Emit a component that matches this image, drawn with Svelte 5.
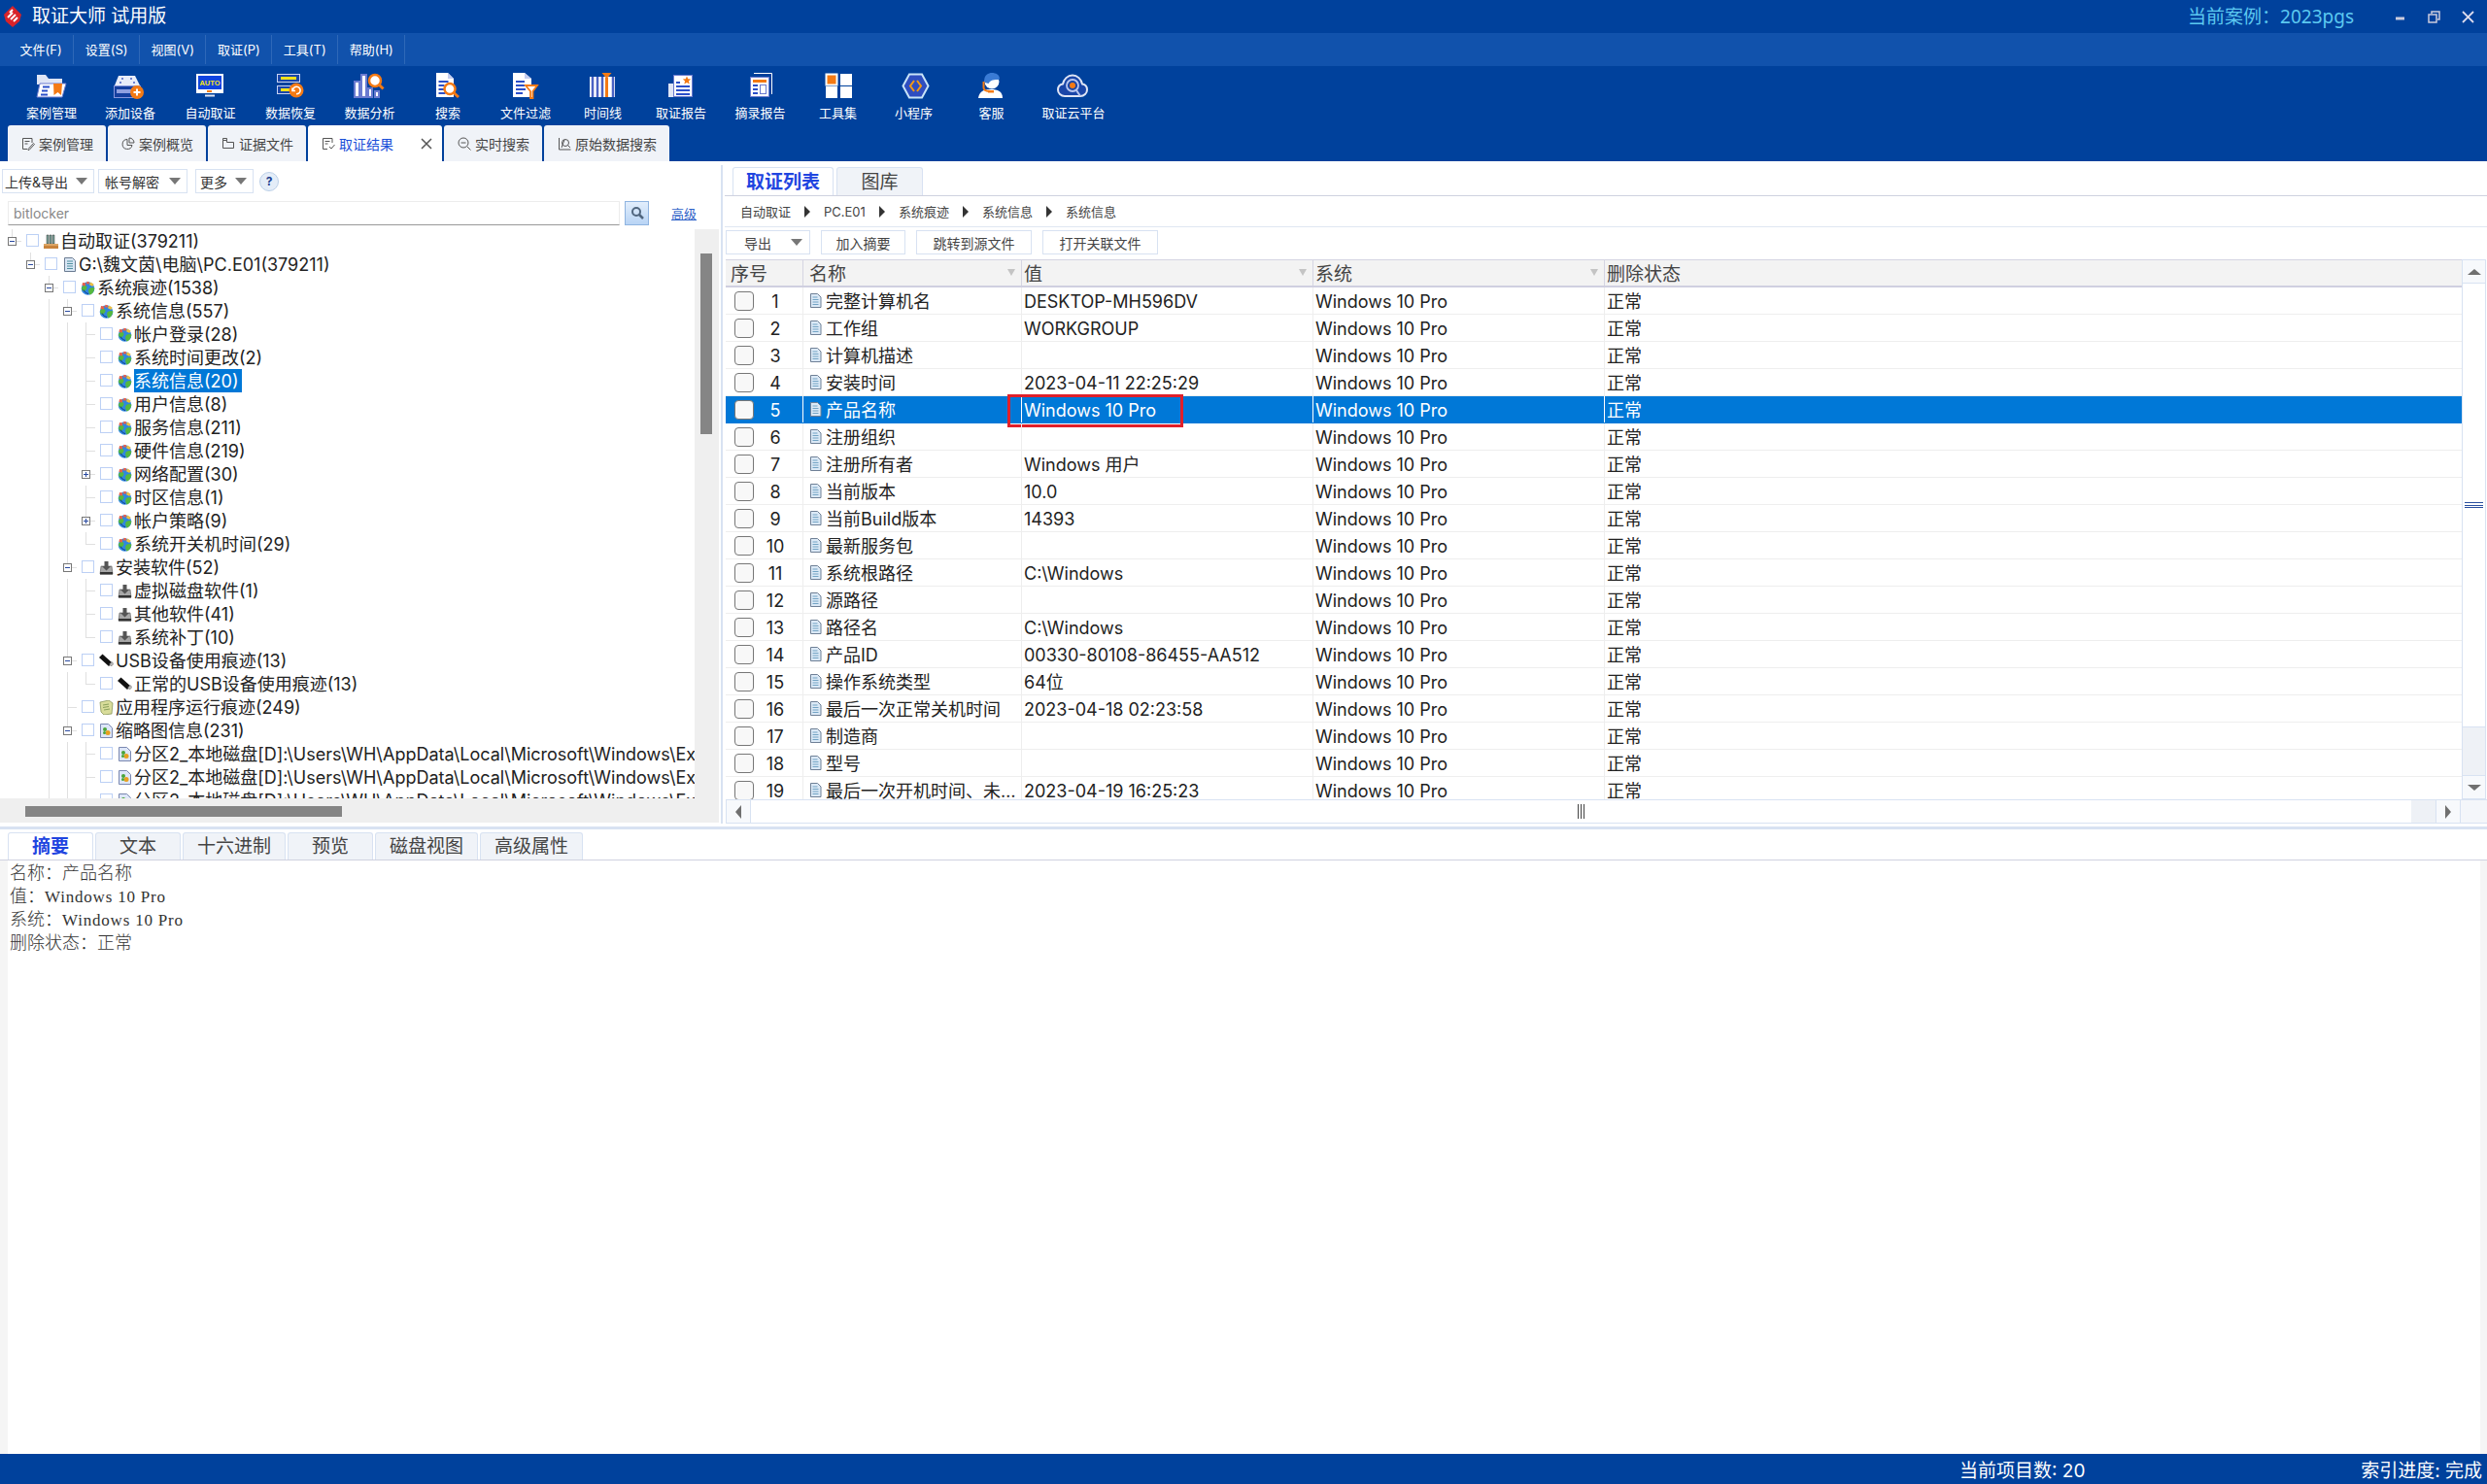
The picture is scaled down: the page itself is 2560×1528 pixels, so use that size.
<script>
  const menus = ['文件(F)', '设置(S)', '视图(V)', '取证(P)', '工具(T)', '帮助(H)'];

  const tools = [
    { id: 't-case', label: '案例管理', w: 80 },
    { id: 't-add', label: '添加设备', w: 82 },
    { id: 't-auto', label: '自动取证', w: 83 },
    { id: 't-recover', label: '数据恢复', w: 82 },
    { id: 't-analysis', label: '数据分析', w: 81 },
    { id: 't-search', label: '搜索', w: 80 },
    { id: 't-filter', label: '文件过滤', w: 80 },
    { id: 't-timeline', label: '时间线', w: 79 },
    { id: 't-report', label: '取证报告', w: 82 },
    { id: 't-excerpt', label: '摘录报告', w: 81 },
    { id: 't-tools', label: '工具集', w: 79 },
    { id: 't-mini', label: '小程序', w: 77 },
    { id: 't-agent', label: '客服', w: 83 },
    { id: 't-cloud', label: '取证云平台', w: 86 }
  ];

  const tabs = [
    { id: 'p-edit', label: '案例管理' },
    { id: 'p-pie', label: '案例概览' },
    { id: 'p-folder', label: '证据文件' },
    { id: 'p-check', label: '取证结果', active: true },
    { id: 'p-find', label: '实时搜索' },
    { id: 'p-raw', label: '原始数据搜索' }
  ];

  // level, label, icon, expander ('-', '+', or line type for leaves)
  const tree = [
    [0, '自动取证(379211)', 'i-books', '-'],
    [1, 'G:\\魏文茵\\电脑\\PC.E01(379211)', 'i-doc', '-'],
    [2, '系统痕迹(1538)', 'i-globe', '-'],
    [3, '系统信息(557)', 'i-globe', '-'],
    [4, '帐户登录(28)', 'i-globe', 'tee'],
    [4, '系统时间更改(2)', 'i-globe', 'tee'],
    [4, '系统信息(20)', 'i-globe', 'tee', true],
    [4, '用户信息(8)', 'i-globe', 'tee'],
    [4, '服务信息(211)', 'i-globe', 'tee'],
    [4, '硬件信息(219)', 'i-globe', 'tee'],
    [4, '网络配置(30)', 'i-globe', '+'],
    [4, '时区信息(1)', 'i-globe', 'tee'],
    [4, '帐户策略(9)', 'i-globe', '+'],
    [4, '系统开关机时间(29)', 'i-globe', 'ell'],
    [3, '安装软件(52)', 'i-install', '-'],
    [4, '虚拟磁盘软件(1)', 'i-install', 'tee'],
    [4, '其他软件(41)', 'i-install', 'tee'],
    [4, '系统补丁(10)', 'i-install', 'ell'],
    [3, 'USB设备使用痕迹(13)', 'i-usb', '-'],
    [4, '正常的USB设备使用痕迹(13)', 'i-usb', 'ell'],
    [3, '应用程序运行痕迹(249)', 'i-note', 'tee'],
    [3, '缩略图信息(231)', 'i-thumb', '-'],
    [4, '分区2_本地磁盘[D]:\\Users\\WH\\AppData\\Local\\Microsoft\\Windows\\Explorer\\thumbcache', 'i-thumb', 'tee'],
    [4, '分区2_本地磁盘[D]:\\Users\\WH\\AppData\\Local\\Microsoft\\Windows\\Explorer\\thumbcache', 'i-thumb', 'tee'],
    [4, '分区2_本地磁盘[D]:\\Users\\WH\\AppData\\Local\\Microsoft\\Windows\\Explorer\\thumbcache', 'i-thumb', 'tee']
  ];

  const crumbs = ['自动取证', 'PC.E01', '系统痕迹', '系统信息', '系统信息'];

  const rows = [
    ['完整计算机名', 'DESKTOP-MH596DV'],
    ['工作组', 'WORKGROUP'],
    ['计算机描述', ''],
    ['安装时间', '2023-04-11 22:25:29'],
    ['产品名称', 'Windows 10 Pro'],
    ['注册组织', ''],
    ['注册所有者', 'Windows 用户'],
    ['当前版本', '10.0'],
    ['当前Build版本', '14393'],
    ['最新服务包', ''],
    ['系统根路径', 'C:\\Windows'],
    ['源路径', ''],
    ['路径名', 'C:\\Windows'],
    ['产品ID', '00330-80108-86455-AA512'],
    ['操作系统类型', '64位'],
    ['最后一次正常关机时间', '2023-04-18 02:23:58'],
    ['制造商', ''],
    ['型号', ''],
    ['最后一次开机时间、未…', '2023-04-19 16:25:23']
  ];

  const detailTabs = ['摘要', '文本', '十六进制', '预览', '磁盘视图', '高级属性'];
</script>

<svg class="defs" aria-hidden="true">
  <symbol id="t-case" viewBox="0 0 36 30">
    <path d="M3 3h9l3 4h14v6H3z" fill="#dfe5f5" />
    <path d="M6 12h27l-4 14H3z" fill="#fff" stroke="#6a7bd0" />
    <path d="M20 12h9l-1 12-3.500-3-4 3z" fill="#f47a14" />
    <path d="M9 15.500h7M8 19.500h6M7 23.500h7" stroke="#2b4fc9" stroke-width="2" />
  </symbol>
  <symbol id="t-add" viewBox="0 0 36 30">
    <path d="M6 4h17l5 10H2z" fill="#e9edf9" />
    <path d="M9 7h2M18 7h2M7 11h2M21 11h2" stroke="#4a62c4" stroke-width="1.500" />
    <rect x="1.500" y="14.500" width="27" height="12" fill="#153f9f" stroke="#8696dc" />
    <rect x="4" y="18" width="15" height="4" fill="#8fa0e0" />
    <circle cx="25" cy="21" r="7" fill="#f47a14" />
    <path d="M25 17.500v7M21.500 21h7" stroke="#fff" stroke-width="2" />
  </symbol>
  <symbol id="t-auto" viewBox="0 0 36 30">
    <rect x="3" y="2" width="28" height="20" fill="#fff" />
    <rect x="5" y="4" width="24" height="14" fill="#1044e0" />
    <rect x="14" y="19" width="5" height="2" fill="#f47a14" />
    <path d="M12 24.500h10" stroke="#dfe5f5" stroke-width="2" />
  </symbol>
  <symbol id="t-recover" viewBox="0 0 36 30">
    <rect x="4.500" y="2.500" width="23" height="8" fill="#1a46a8" stroke="#c8d2f2" />
    <rect x="8" y="5" width="16" height="3" fill="#f4e11a" />
    <rect x="4.500" y="14.500" width="15" height="8" fill="#1a46a8" stroke="#c8d2f2" />
    <rect x="8" y="17" width="9" height="3" fill="#f4e11a" />
    <circle cx="24" cy="19" r="7.500" fill="#f47a14" />
    <path d="M20.500 19a3.800 3.800 0 1 1 3.500 3.800M20 16.500v3h3" fill="none" stroke="#fff" stroke-width="1.600" />
  </symbol>
  <symbol id="t-analysis" viewBox="0 0 36 30">
    <g fill="#fff" stroke="#6a7bd0" stroke-width="2">
      <rect x="2" y="10" width="5" height="16" />
      <rect x="9" y="3" width="5" height="23" />
      <rect x="16" y="17" width="4" height="9" />
      <rect x="23" y="20" width="4" height="6" />
    </g>
    <circle cx="23" cy="9" r="6" fill="#fff" stroke="#f47a14" stroke-width="2.500" />
    <path d="M27.500 13.500l4 4" stroke="#f47a14" stroke-width="3" />
  </symbol>
  <symbol id="t-search" viewBox="0 0 36 30">
    <path d="M6 1h12l6 6v19H6z" fill="#fff" />
    <path d="M18 1v6h6" fill="#c4cdf0" />
    <path d="M8.500 10h10M8.500 14h6M8.500 18h6M8.500 22h7" stroke="#2b4fc9" stroke-width="2" />
    <circle cx="20" cy="17.500" r="5.500" fill="#fff" stroke="#f47a14" stroke-width="2.500" />
    <path d="M24 21.500l5 4.500" stroke="#f47a14" stroke-width="3" />
  </symbol>
  <symbol id="t-filter" viewBox="0 0 36 30">
    <path d="M5 1h12l7 6v19H5z" fill="#fff" />
    <path d="M17 1v6h7" fill="#c4cdf0" />
    <path d="M8 10h9M8 14h9M8 18h10M8 22h7" stroke="#2b4fc9" stroke-width="2" />
    <path d="M18 14h12l-4.500 6v7h-2.500v-7z" fill="#fff" stroke="#f47a14" stroke-width="1.800" />
  </symbol>
  <symbol id="t-timeline" viewBox="0 0 36 30">
    <rect x="4" y="5" width="26" height="21" fill="#fff" />
    <path d="M7 5v21M12 5v21M17 5v21M28 5v21" stroke="#4a62c4" stroke-width="2.500" />
    <path d="M16.500 1h10l-5 6z" fill="#f47a14" />
    <rect x="20" y="6" width="3" height="20" fill="#f47a14" />
  </symbol>
  <symbol id="t-report" viewBox="0 0 36 30">
    <rect x="5" y="12" width="7" height="14" fill="#dfe5f5" />
    <rect x="10.500" y="3.500" width="19" height="22" fill="#fff" stroke="#6a7bd0" />
    <path d="M24 4.500l1.200 2.800 3 .2-2.300 2 .8 3-2.700-1.600-2.700 1.600.8-3-2.300-2 3-.2z" fill="#f47a14" />
    <path d="M13 11h4M13 15h14M13 19h14M13 23h14" stroke="#2b4fc9" stroke-width="2" />
  </symbol>
  <symbol id="t-excerpt" viewBox="0 0 36 30">
    <path d="M11 1.500h18.500V23" fill="none" stroke="#fff" />
    <rect x="7.500" y="5.500" width="19" height="20" fill="#fff" stroke="#6a7bd0" />
    <rect x="10" y="8" width="14" height="3" fill="#f47a14" />
    <path d="M10 14h5M10 18h5M10 22h5" stroke="#2b4fc9" stroke-width="2" />
    <rect x="17.500" y="13.500" width="6" height="9" fill="#fff" stroke="#6a7bd0" />
  </symbol>
  <symbol id="t-tools" viewBox="0 0 36 30">
    <rect x="5.500" y="2.500" width="11" height="11" fill="#f47a14" stroke="#fff" stroke-width="2" />
    <rect x="20" y="2" width="12" height="12" fill="#fff" />
    <rect x="5" y="15" width="12" height="12" fill="#fff" />
    <rect x="20" y="15" width="12" height="12" fill="#fff" />
  </symbol>
  <symbol id="t-mini" viewBox="0 0 36 30">
    <path d="M13 2.500h13l6.500 12-6.500 12H13L6.500 14.500z" fill="#2f4ec0" stroke="#c8e4f8" stroke-width="2" />
    <path d="M18 9l-4 5.500 4 5.500M21 9l4 5.500-4 5.500" fill="none" stroke="#f49a14" stroke-width="2" />
  </symbol>
  <symbol id="t-agent" viewBox="0 0 36 30">
    <path d="M4 27c1-7 6-9 13-9s12 2 12 9z" fill="#fff" />
    <circle cx="18" cy="10" r="7.500" fill="#fff" />
    <path d="M10.500 11C9 5 13 1 18 1s9 3 7.500 7c-5 0-9 0-11 4z" fill="#3a7bd5" />
    <path d="M9.500 10v6c0 3 3 4 7 4" fill="none" stroke="#f47a14" stroke-width="2" />
    <rect x="14" y="19" width="6" height="2.500" fill="#f47a14" />
  </symbol>
  <symbol id="t-cloud" viewBox="0 0 36 30">
    <path d="M9 25c-4 0-7-3-7-6.500 0-3 2-5.500 5-6 1-5 5-9 10-9s9 4 10 9c3 .5 5 3 5 6 0 3.500-3 6.500-7 6.500z" fill="#1a46a8" stroke="#dfe5f5" stroke-width="2" />
    <circle cx="17" cy="14" r="6" fill="none" stroke="#b8c6f0" stroke-width="1.800" />
    <circle cx="17" cy="14" r="3" fill="#f47a14" />
    <path d="M21 19l4 6" stroke="#b8c6f0" stroke-width="2" />
  </symbol>

  <symbol id="p-edit" viewBox="0 0 14 14">
    <path d="M11 6V1.500H1.500v11H6M3.500 4.500h5M3.500 7h3M7 12.500l5.500-6 1 1-5.500 6H7z" fill="none" stroke="#555" />
  </symbol>
  <symbol id="p-pie" viewBox="0 0 14 14">
    <path d="M6 2.500a5 5 0 1 0 5 6H6zM8 1a5 5 0 0 1 5 5H8z" fill="none" stroke="#555" />
  </symbol>
  <symbol id="p-folder" viewBox="0 0 14 14">
    <path d="M1.500 3.500v-2h4v2M1.500 3.500v8h11v-6h-7V3.500z" fill="none" stroke="#555" />
  </symbol>
  <symbol id="p-check" viewBox="0 0 14 14">
    <path d="M11 6V1.500H1.500v11H6M3.500 4.500h5M3.500 7h3M8 10l2 2 3.500-4" fill="none" stroke="#555" />
  </symbol>
  <symbol id="p-find" viewBox="0 0 14 14">
    <circle cx="6" cy="6" r="5" fill="none" stroke="#555" />
    <path d="M3.500 6h5M10 10l3.500 3.500" stroke="#555" />
  </symbol>
  <symbol id="p-raw" viewBox="0 0 14 14">
    <path d="M1.500 1v12h12" fill="none" stroke="#555" />
    <circle cx="8" cy="6" r="3.500" fill="none" stroke="#555" />
    <path d="M10.500 8.500l2.500 2.500M4 11l3-8" stroke="#555" />
  </symbol>

  <symbol id="i-globe" viewBox="0 0 15 15">
    <circle cx="7.500" cy="8" r="6.800" fill="#2f86e0" />
    <path d="M1 7.500c1-2.500 3-3 5-2 1.500 2-.5 4-2.500 5.500C2 10.500 1 9 1 7.500zM9 8c2-1 4-1.500 5.300-.5C14 11 12 14 9.500 14.500 8 12 7.500 9.500 9 8z" fill="#55b840" />
    <path d="M2 2l3.500.5-.8 3L1.500 5zM6.500 .8l2.500.5-.5 2.500-2.500-.5z" fill="#e8604a" />
    <path d="M10 1.500l3.500 2-1.200 2.500-3.300-1.800z" fill="#f0c040" />
    <path d="M3 9.500c1.500 2.500 3 3.500 5 4" fill="none" stroke="#0f3a80" stroke-width="1" />
  </symbol>
  <symbol id="i-books" viewBox="0 0 15 15">
    <path d="M3 1h2v9H3zM6 1h2v9H6zM9 1h2v9H9z" fill="#7da89f" stroke="#333" stroke-width=".5" />
    <path d="M0 10h15v5H0z" fill="#c8833c" />
    <path d="M0 11h15" stroke="#f0c890" />
  </symbol>
  <symbol id="i-doc" viewBox="0 0 15 15">
    <path d="M2.500 .5h8l3 3v11h-11z" fill="#d9e6f4" stroke="#6c7c92" />
    <path d="M5 4h6M5 6.500h6M5 9h6M5 11.500h6" stroke="#4f8f9f" />
  </symbol>
  <symbol id="i-install" viewBox="0 0 15 15">
    <path d="M2 6h11l1 8H1z" fill="#a8a8a8" stroke="#555" stroke-width=".6" />
    <path d="M1 12h13v2.500H1z" fill="#333" />
    <path d="M5.500 1h4v5h2.500l-4.500 4.500L3 6h2.500z" fill="#555" />
  </symbol>
  <symbol id="i-usb" viewBox="0 0 15 15">
    <path d="M0 4l3.500-3.500 10 9-3.500 3.500z" fill="#111" />
    <path d="M10.500 11l2.500-2.500 2 2-2.500 2.500z" fill="#bbb" stroke="#555" stroke-width=".5" />
  </symbol>
  <symbol id="i-note" viewBox="0 0 15 15">
    <path d="M1 2l9-2 4 3-1 11-8 1-3-3z" fill="#d8dc9a" stroke="#7b8a4a" stroke-width=".7" />
    <path d="M4 5l6-1M4 7.500l6-1M5 10l6-1" stroke="#8aa05a" />
  </symbol>
  <symbol id="i-thumb" viewBox="0 0 15 15">
    <path d="M1.500 .5h8l4 4v10h-12z" fill="#dde6f8" stroke="#7a88b0" />
    <circle cx="6" cy="6" r="2" fill="#4aa53a" />
    <circle cx="9" cy="9.500" r="2.500" fill="#e8a020" />
    <circle cx="5.500" cy="9.500" r="1.500" fill="#4aa53a" />
  </symbol>
  <symbol id="i-file" viewBox="0 0 13 15">
    <path d="M1.500 .5h7l3.500 3.500v10.500H1.500z" fill="#dbe9f6" stroke="#6f8096" />
    <path d="M3.500 4h5M3.500 6.500h6M3.500 9h6M3.500 11.500h6" stroke="#72a3c4" />
  </symbol>
</svg>

<div class="app">
  <header class="titlebar">
    <svg class="logo" width="20" height="24" viewBox="0 0 20 24">
      <path d="M10 1l9 9-2 7-7 6-7-6-2-7z" fill="#d8232a" />
      <path d="M5 13l5-5M8 15l5-5M11 17l4-4M7 8l3-3" stroke="#fff" stroke-width="2" />
    </svg>
    <span class="app-name">取证大师 试用版</span>
    <span class="case-name">当前案例：2023pgs</span>
    <div class="win-btns">
      <svg width="12" height="12" viewBox="0 0 12 12"><path d="M1 8h9" stroke="#ccd" stroke-width="3" /></svg>
      <svg width="13" height="13" viewBox="0 0 13 13"><path d="M4 3V1h8v8h-2M1 4h8v8H1z" fill="none" stroke="#ccd" stroke-width="1.500" /></svg>
      <svg width="13" height="13" viewBox="0 0 13 13"><path d="M1 1l11 11M12 1L1 12" stroke="#dde" stroke-width="1.800" /></svg>
    </div>
  </header>

  <nav class="menubar">
    {#each menus as m}
      <span class="menu-item">{m}</span>
    {/each}
  </nav>

  <div class="toolbar">
    {#each tools as t}
      <div class="tool" style="width: {t.w}px">
        <svg width="36" height="30" viewBox="0 0 36 30">
          <use href="#{t.id}" width="36" height="30" />
          {#if t.id === 't-auto'}
            <text x="17" y="13.500" text-anchor="middle" font-size="7.500" font-weight="700" font-family="Liberation Sans" fill="#f4e11a">AUTO</text>
          {/if}
        </svg>
        <span>{t.label}</span>
      </div>
    {/each}
  </div>

  <div class="tabstrip">
    {#each tabs as t}
      <div class="tab" class:active={t.active}>
        <svg width="14" height="14"><use href="#{t.id}" /></svg>
        <span>{t.label}</span>
        {#if t.active}
          <svg class="tab-close" width="12" height="12" viewBox="0 0 12 12"><path d="M1 1l10 10M11 1L1 11" stroke="#555" stroke-width="1.500" /></svg>
        {/if}
      </div>
    {/each}
  </div>

  <main class="split-top">
    <section class="left">
      <div class="left-tools">
        <button class="drop wide">上传&amp;导出<i class="tri"></i></button>
        <button class="drop wide2">帐号解密<i class="tri"></i></button>
        <button class="drop narrow">更多<i class="tri"></i></button>
        <span class="help">?</span>
      </div>
      <div class="search-row">
        <div class="search-input">bitlocker</div>
        <div class="search-btn">
          <svg width="14" height="14" viewBox="0 0 14 14"><circle cx="6" cy="6" r="4" fill="none" stroke="#50667f" stroke-width="2" /><path d="M9 9l4 4" stroke="#50667f" stroke-width="2.500" /></svg>
        </div>
        <span class="adv">高级</span>
      </div>
      <div class="tree-wrap">
        <div class="tree">
          {#each tree as [level, label, icon, exp, selected]}
            <div class="node">
              {#each Array(level) as _, i}
                <span class="cell" class:line={i >= 2}></span>
              {/each}
              <span class="cell {exp === 'tee' || exp === 'ell' ? exp : 'stub'}">
                {#if exp === '-' || exp === '+'}
                  <span class="exp" class:plus={exp === '+'}></span>
                {/if}
              </span>
              <span class="box"></span>
              <svg class="node-icon" width="15" height="15"><use href="#{icon}" /></svg>
              <span class="node-label" class:sel={selected}>{label}</span>
            </div>
          {/each}
        </div>
        <div class="tree-vbar"><div class="tree-thumb"></div></div>
      </div>
      <div class="left-hbar"><div class="left-hthumb"></div></div>
    </section>

    <div class="vsplit"></div>

    <section class="right">
      <div class="list-tabs">
        <div class="list-tab active">取证列表</div>
        <div class="list-tab">图库</div>
      </div>
      <div class="crumbs">
        {#each crumbs as c, i}
          {#if i > 0}<i class="crumb-arrow"></i>{/if}
          <span>{c}</span>
        {/each}
      </div>
      <div class="actions">
        <button class="act first">导出<i class="tri"></i></button>
        <button class="act a2">加入摘要</button>
        <button class="act a3">跳转到源文件</button>
        <button class="act a3">打开关联文件</button>
      </div>

      <div class="table-wrap">
        <div class="table">
          <div class="tr head">
            <div class="td c0 head-no"><span class="txt">序号</span></div>
            <div class="td c1"><span class="txt">名称</span><i class="funnel"></i></div>
            <div class="td c2"><span class="txt">值</span><i class="funnel"></i></div>
            <div class="td c3"><span class="txt">系统</span><i class="funnel"></i></div>
            <div class="td c4"><span class="txt">删除状态</span></div>
          </div>
          {#each rows as [name, value], i}
            <div class="tr" class:selected={i === 4}>
              <div class="td c0"><span class="chk"></span><span class="no txt">{i + 1}</span></div>
              <div class="td c1"><svg width="13" height="15"><use href="#i-file" /></svg><span class="txt">{name}</span></div>
              <div class="td c2">
                <span class="txt">{value}</span>
                {#if i === 4}<span class="red-box"></span>{/if}
              </div>
              <div class="td c3"><span class="txt">Windows 10 Pro</span></div>
              <div class="td c4"><span class="txt">正常</span></div>
            </div>
          {/each}
        </div>
        <div class="vbar">
          <div class="sb-btn"><i class="up"></i></div>
          <div class="vtrack"><span class="grip"></span></div>
          <div class="vrest"></div>
          <div class="sb-btn"><i class="down"></i></div>
        </div>
      </div>

      <div class="hbar">
        <div class="hbtn"><i class="left-a"></i></div>
        <div class="htrack"><span class="hgrip"></span></div>
        <div class="hrest"></div>
        <div class="hbtn"><i class="right-a"></i></div>
        <div class="hcorner"></div>
      </div>
    </section>
  </main>

  <div class="hsplit"></div>

  <section class="detail">
    <div class="detail-tabs">
      {#each detailTabs as t, i}
        <div class="detail-tab" class:active={i === 0}>{t}</div>
      {/each}
    </div>
    <div class="detail-body">
      <p>名称：产品名称</p>
      <p>值：<span class="mono">Windows 10 Pro</span></p>
      <p>系统：<span class="mono">Windows 10 Pro</span></p>
      <p>删除状态：正常</p>
    </div>
  </section>

  <footer class="status">
    <span class="st-count">当前项目数: 20</span>
    <span class="st-index">索引进度: 完成</span>
  </footer>
</div>

<style>
  :global(body) {
    margin: 0;
    background: #fff;
  }

  .defs {
    position: absolute;
    width: 0;
    height: 0;
  }

  .app {
    width: 2560px;
    height: 1528px;
    display: flex;
    flex-direction: column;
    overflow: hidden;
    font-family: Inter, "Noto Sans CJK SC", sans-serif;
    color: #222;
  }

  .titlebar {
    height: 34px;
    flex: none;
    background: #00419c;
    display: flex;
    align-items: center;
    color: #fff;
  }

  .logo {
    margin-left: 3px;
  }

  .app-name {
    margin-left: 10px;
    font-size: 19px;
    line-height: 28px;
  }

  .case-name {
    margin-left: auto;
    font-family: "Noto Sans", "Noto Sans CJK SC", sans-serif;
    font-size: 19px;
    line-height: 28px;
    color: #5cc8f0;
  }

  .win-btns {
    display: flex;
    align-items: center;
    gap: 22px;
    margin-left: 42px;
    margin-right: 13px;
  }

  .menubar {
    height: 34px;
    flex: none;
    background: #1152ac;
    display: flex;
    align-items: center;
    padding-left: 9px;
  }

  .menu-item {
    height: 30px;
    line-height: 30px;
    padding: 0 11.5px;
    font-size: 13px;
    color: #fff;
    border-right: 1px solid #2e68b8;
  }

  .toolbar {
    height: 61px;
    flex: none;
    box-sizing: border-box;
    background: #00419c;
    display: flex;
    padding: 6px 0 0 13px;
  }

  .tool {
    display: flex;
    flex-direction: column;
    align-items: center;
    flex: none;
    color: #fff;
    font-size: 13px;
    line-height: 18px;
  }

  .tool svg {
    margin-bottom: 3px;
  }

  .tabstrip {
    height: 37px;
    flex: none;
    background: #00419c;
    display: flex;
    gap: 2px;
    padding-left: 8px;
  }

  .tab {
    display: flex;
    align-items: center;
    gap: 4px;
    padding: 0 13px 0 14px;
    background: #f0f3f8;
    border-radius: 3px 3px 0 0;
    font-size: 14px;
    color: #444;
  }

  .tab.active {
    background: #fff;
    color: #1a4fd8;
  }

  .tab-close {
    margin-left: 24px;
    margin-right: -3px;
  }

  .split-top {
    height: 682px;
    flex: none;
    display: flex;
    background: #fff;
  }

  .left {
    width: 740px;
    flex: none;
    display: flex;
    flex-direction: column;
  }

  .left-tools {
    display: flex;
    align-items: center;
    gap: 4px;
    height: 25px;
    margin: 8px 0 0 2px;
  }

  .drop {
    display: flex;
    align-items: center;
    justify-content: space-between;
    height: 25px;
    box-sizing: border-box;
    background: #fff;
    border: 1px solid #d8e2f2;
    padding: 0 6px 0 2px;
    font: inherit;
    font-size: 14px;
    color: #333;
  }

  .wide {
    width: 95px;
  }

  .wide2 {
    width: 92px;
    padding-left: 6px;
  }

  .narrow {
    width: 60px;
    margin-left: 4px;
    padding-left: 4px;
  }

  .tri {
    display: inline-block;
    width: 0;
    height: 0;
    border-left: 6px solid transparent;
    border-right: 6px solid transparent;
    border-top: 7px solid #777;
  }

  .help {
    width: 18px;
    height: 18px;
    margin-left: 2px;
    border-radius: 50%;
    background: #e4edf8;
    border: 1px solid #bcd0e8;
    color: #1d3f8f;
    font-size: 12px;
    font-weight: 700;
    line-height: 18px;
    text-align: center;
  }

  .search-row {
    display: flex;
    align-items: center;
    height: 26px;
    margin: 7px 0 0 8px;
  }

  .search-input {
    width: 630px;
    height: 25px;
    box-sizing: border-box;
    border: 1px solid #ececec;
    border-bottom: 1px solid #999;
    padding-left: 5px;
    font-size: 14px;
    line-height: 23px;
    color: #888;
  }

  .search-btn {
    width: 25px;
    height: 25px;
    margin-left: 5px;
    box-sizing: border-box;
    display: flex;
    align-items: center;
    justify-content: center;
    background: linear-gradient(#e2eefc, #b8d4f5);
    border: 1px solid #8fb4e0;
  }

  .adv {
    margin-left: 23px;
    font-size: 13px;
    color: #2f62c8;
    text-decoration: underline;
  }

  .tree-wrap {
    height: 586px;
    margin-top: 4px;
    flex: none;
    display: flex;
  }

  .tree {
    width: 715px;
    flex: none;
    overflow: hidden;
  }

  .node {
    display: flex;
    align-items: center;
    height: 24px;
    padding-left: 3px;
    white-space: nowrap;
    font-size: 18px;
  }

  .cell {
    flex: none;
    width: 19px;
    height: 24px;
    display: flex;
    align-items: center;
    justify-content: center;
    background-repeat: no-repeat;
  }

  .cell.line {
    background-image: linear-gradient(#e0e0e0, #e0e0e0);
    background-position: 9px 0;
    background-size: 1px 100%;
  }

  .cell.stub,
  .cell.ell {
    background-image: linear-gradient(#e0e0e0, #e0e0e0), linear-gradient(#e0e0e0, #e0e0e0);
    background-position: 9px 0, 9px 12px;
    background-size: 1px 12px, 10px 1px;
  }

  .cell.tee {
    background-image: linear-gradient(#e0e0e0, #e0e0e0), linear-gradient(#e0e0e0, #e0e0e0);
    background-position: 9px 0, 9px 12px;
    background-size: 1px 100%, 10px 1px;
  }

  .exp {
    width: 9px;
    height: 9px;
    box-sizing: border-box;
    border: 1px solid #777;
    background: linear-gradient(#2a4aa0, #2a4aa0) center / 5px 1px no-repeat #fff;
  }

  .exp.plus {
    background:
      linear-gradient(#2a4aa0, #2a4aa0) center / 5px 1px no-repeat,
      linear-gradient(#2a4aa0, #2a4aa0) center / 1px 5px no-repeat #fff;
  }

  .box {
    flex: none;
    width: 11px;
    height: 11px;
    margin: -2px 0 0 5px;
    border: 1px solid #bcd0f5;
  }

  .node-icon {
    flex: none;
    margin-left: 5px;
  }

  .node-label {
    margin-left: 2px;
    height: 24px;
    line-height: 26px;
    padding-right: 4px;
  }

  .node-label.sel {
    background: #0078d7;
    color: #fff;
  }

  .tree-vbar {
    width: 25px;
    flex: none;
    background: #efefef;
  }

  .tree-thumb {
    width: 12px;
    height: 186px;
    margin: 25px 0 0 6px;
    background: #858585;
  }

  .left-hbar {
    height: 25px;
    flex: none;
    background: #efefef;
    padding: 8px 0 0 26px;
    box-sizing: border-box;
  }

  .left-hthumb {
    width: 326px;
    height: 11px;
    background: #858585;
  }

  .vsplit {
    width: 6px;
    flex: none;
    margin-top: 4px;
    background: linear-gradient(#d8e2f2, #d8e2f2) 2px 0 / 2px 100% no-repeat;
  }

  .right {
    flex: 1;
    min-width: 0;
    display: flex;
    flex-direction: column;
    padding-top: 6px;
  }

  .list-tabs {
    display: flex;
    gap: 3px;
    height: 30px;
    flex: none;
    padding-left: 8px;
    border-bottom: 1px solid #cfd2e0;
    box-sizing: border-box;
  }

  .list-tab {
    width: 89px;
    box-sizing: border-box;
    text-align: center;
    font-size: 19px;
    line-height: 30px;
    background: #f0f3f8;
    border: 1px solid #d8e2f2;
    border-bottom: none;
    border-radius: 3px 3px 0 0;
    color: #444;
  }

  .list-tab.active {
    width: 104px;
    background: #fff;
    color: #1f45e0;
    font-weight: 700;
  }

  .crumbs {
    height: 32px;
    flex: none;
    box-sizing: border-box;
    display: flex;
    align-items: center;
    gap: 14px;
    padding-left: 16px;
    border-bottom: 1px solid #dfe6f2;
    font-size: 13px;
    color: #444;
  }

  .crumb-arrow {
    width: 0;
    height: 0;
    border-top: 6px solid transparent;
    border-bottom: 6px solid transparent;
    border-left: 6px solid #333;
  }

  .actions {
    display: flex;
    gap: 11px;
    height: 25px;
    flex: none;
    margin: 3px 0 5px 1px;
  }

  .act {
    height: 25px;
    box-sizing: border-box;
    background: #fff;
    border: 1px solid #d8e2f2;
    padding: 0;
    font: inherit;
    font-size: 14px;
    color: #444;
  }

  .act.first {
    width: 87px;
    display: flex;
    align-items: center;
    justify-content: space-between;
    padding: 0 7px 0 18px;
  }

  .a2 {
    width: 87px;
  }

  .a3 {
    width: 119px;
  }

  .table-wrap {
    height: 556px;
    flex: none;
    display: flex;
    margin-left: 1px;
  }

  .table {
    width: 1787px;
    flex: none;
    overflow: hidden;
    font-size: 18px;
    line-height: 24px;
  }

  .tr {
    display: flex;
    height: 28px;
    box-sizing: border-box;
    border-bottom: 1px solid #eee;
    color: #222;
  }

  .tr.head {
    height: 29px;
    background: #f3f3f3;
    border-top: 1px solid #d5d5e2;
    border-bottom: 2px solid #cfcfe0;
    font-size: 19px;
    color: #444;
  }

  .tr.selected {
    background: #0078d7;
    color: #fff;
    border-bottom-color: #0078d7;
  }

  .td {
    display: flex;
    align-items: center;
    flex: none;
    box-sizing: border-box;
    white-space: nowrap;
    border-right: 1px solid #eee;
    padding-left: 2px;
    position: relative;
  }

  .txt {
    position: relative;
    top: 1.5px;
  }

  .head .td {
    border-right-color: #d5d5e2;
  }

  .selected .td {
    border-right-color: #fff;
  }

  .c0 {
    width: 80px;
    padding-left: 9px;
  }

  .head-no {
    padding-left: 5px;
  }

  .c1 {
    width: 225px;
    padding-left: 6px;
    gap: 4px;
  }

  .c2,
  .c3 {
    width: 300px;
  }

  .c4 {
    flex: 1;
    border-right: none;
  }

  .chk {
    width: 20px;
    height: 20px;
    box-sizing: border-box;
    border: 1px solid #777;
    border-radius: 4px;
    background: #f8f8f8;
  }

  .no {
    width: 44px;
    text-align: center;
  }

  .funnel {
    position: absolute;
    right: 6px;
    top: 9px;
    width: 0;
    height: 0;
    border-left: 4px solid transparent;
    border-right: 4px solid transparent;
    border-top: 7px solid #c4c4c4;
  }

  .red-box {
    position: absolute;
    left: -15px;
    top: -2px;
    width: 181px;
    height: 34px;
    box-sizing: border-box;
    border: 3px solid #e0202a;
  }

  .vbar {
    width: 25px;
    flex: none;
    display: flex;
    flex-direction: column;
    box-sizing: border-box;
    border-left: 1px solid #d8e2f2;
    border-right: 1px solid #d8e2f2;
  }

  .sb-btn {
    height: 25px;
    flex: none;
    box-sizing: border-box;
    display: flex;
    align-items: center;
    justify-content: center;
    background: #f7f9fc;
    border-top: 1px solid #d8e2f2;
    border-bottom: 1px solid #d8e2f2;
  }

  .up,
  .down,
  .left-a,
  .right-a {
    width: 0;
    height: 0;
    display: block;
  }

  .up {
    border-left: 7px solid transparent;
    border-right: 7px solid transparent;
    border-bottom: 6px solid #707070;
  }

  .down {
    border-left: 7px solid transparent;
    border-right: 7px solid transparent;
    border-top: 6px solid #707070;
  }

  .left-a {
    border-top: 7px solid transparent;
    border-bottom: 7px solid transparent;
    border-right: 6px solid #707070;
  }

  .right-a {
    border-top: 7px solid transparent;
    border-bottom: 7px solid transparent;
    border-left: 6px solid #707070;
  }

  .vtrack {
    height: 456px;
    flex: none;
    display: flex;
    align-items: center;
    justify-content: center;
    background: #fff;
  }

  .grip {
    width: 19px;
    height: 6px;
    box-sizing: border-box;
    border-top: 1px solid #2a4f9f;
    border-bottom: 1px solid #2a4f9f;
    background: linear-gradient(#2a4f9f, #2a4f9f) 0 1.5px / 100% 1px no-repeat;
  }

  .vrest {
    flex: 1;
    background: #eef1f6;
    border-top: 1px solid #d8e2f2;
  }

  .hbar {
    height: 25px;
    flex: none;
    display: flex;
    margin-left: 1px;
    box-sizing: border-box;
    border-top: 1px solid #d8e2f2;
    border-bottom: 1px solid #d8e2f2;
  }

  .hbtn {
    width: 26px;
    flex: none;
    display: flex;
    align-items: center;
    justify-content: center;
    box-sizing: border-box;
    background: #f7f9fc;
    border-left: 1px solid #d8e2f2;
    border-right: 1px solid #d8e2f2;
  }

  .htrack {
    flex: 1;
    display: flex;
    align-items: center;
    justify-content: center;
  }

  .hgrip {
    width: 7px;
    height: 15px;
    box-sizing: border-box;
    border-left: 1px solid #444;
    border-right: 1px solid #444;
    background: linear-gradient(#444, #444) center / 1px 100% no-repeat;
  }

  .hrest {
    width: 25px;
    flex: none;
    background: #eef1f6;
  }

  .hcorner {
    width: 27px;
    flex: none;
    background: #f4f6fa;
  }

  .hsplit {
    height: 9px;
    flex: none;
    background: linear-gradient(#d8e2f2, #d8e2f2) 0 3px / 100% 3px no-repeat;
  }

  .detail {
    height: 640px;
    flex: none;
    display: flex;
    flex-direction: column;
  }

  .detail-tabs {
    display: flex;
    gap: 2px;
    height: 29px;
    flex: none;
    box-sizing: border-box;
    padding-left: 8px;
    border-bottom: 1px solid #cfd2e0;
  }

  .detail-tab {
    min-width: 88px;
    padding: 0 14px;
    box-sizing: border-box;
    text-align: center;
    font-size: 19px;
    line-height: 28px;
    background: #f0f3f8;
    border: 1px solid #d8e2f2;
    border-bottom: none;
    border-radius: 3px 3px 0 0;
    color: #444;
  }

  .detail-tab.active {
    background: #fff;
    color: #1f45e0;
    font-weight: 700;
  }

  .detail-body {
    flex: 1;
    padding-left: 2px;
    margin: 0 7px 0 8px;
    box-shadow: -8px 0 0 #f5f5f5, 7px 0 0 #f5f5f5;
    font-size: 18px;
    color: #333;
  }

  .detail-body p {
    margin: 0;
    height: 24px;
    line-height: 26px;
    font-weight: 300;
  }

  .mono {
    font-family: "Liberation Serif", serif;
    font-size: 17px;
    letter-spacing: .8px;
  }

  .status {
    height: 31px;
    flex: none;
    background: #00419c;
    display: flex;
    align-items: center;
    font-size: 19px;
    color: #fff;
  }

  .st-count {
    margin-left: 2017px;
  }

  .st-index {
    margin-left: auto;
    margin-right: 5px;
  }
</style>
